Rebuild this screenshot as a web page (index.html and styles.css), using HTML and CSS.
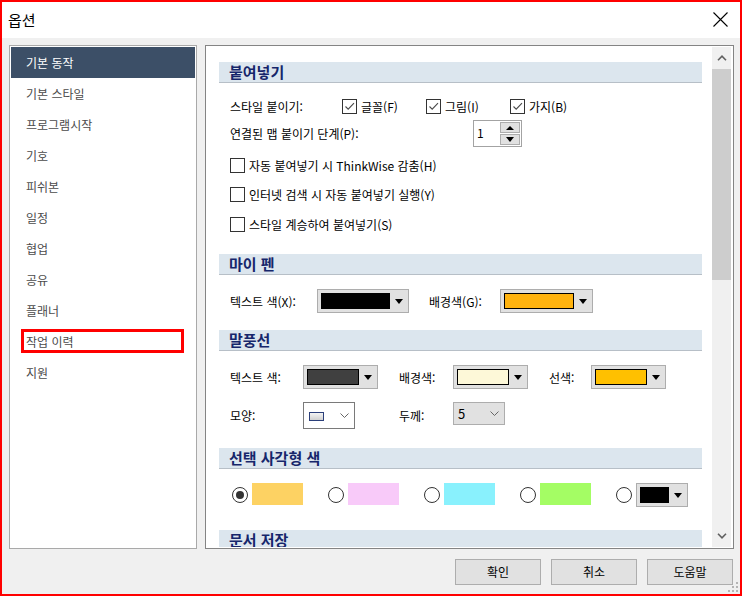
FILE: index.html
```html
<!DOCTYPE html>
<html lang="ko">
<head>
<meta charset="utf-8">
<title>옵션</title>
<link rel="stylesheet" href="styles.css">
</head>
<body>
<div class="window">
  <div class="titlebar">
    <span class="title">옵션</span>
    <svg class="close" width="15" height="15" viewBox="0 0 15 15"><path d="M0.5 0.5 L14.5 14.5 M14.5 0.5 L0.5 14.5" stroke="#000" stroke-width="1.1" fill="none"/></svg>
  </div>
  <div class="main">
    <ul class="nav">
      <li class="nav-item active">기본 동작</li>
      <li class="nav-item">기본 스타일</li>
      <li class="nav-item">프로그램시작</li>
      <li class="nav-item">기호</li>
      <li class="nav-item">피쉬본</li>
      <li class="nav-item">일정</li>
      <li class="nav-item">협업</li>
      <li class="nav-item">공유</li>
      <li class="nav-item">플래너</li>
      <li class="nav-item">작업 이력</li>
      <li class="nav-item">지원</li>
    </ul>
    <div class="panel">
      <div class="content">
        <div class="sec-head mt15">붙여넣기</div>
        <div class="row h15 mt16">
          <span class="lbl w112">스타일 붙이기:</span>
          <span class="chk-group"><span class="chk checked"><svg width="13" height="13" viewBox="0 0 13 13"><path d="M2.5 6.5 L5.2 9.2 L11 3.2" stroke="#4a4a4a" stroke-width="1.1" fill="none"/></svg></span><span class="chk-lbl">글꼴(F)</span></span>
          <span class="chk-group"><span class="chk checked"><svg width="13" height="13" viewBox="0 0 13 13"><path d="M2.5 6.5 L5.2 9.2 L11 3.2" stroke="#4a4a4a" stroke-width="1.1" fill="none"/></svg></span><span class="chk-lbl">그림(I)</span></span>
          <span class="chk-group"><span class="chk checked"><svg width="13" height="13" viewBox="0 0 13 13"><path d="M2.5 6.5 L5.2 9.2 L11 3.2" stroke="#4a4a4a" stroke-width="1.1" fill="none"/></svg></span><span class="chk-lbl">가지(B)</span></span>
        </div>
        <div class="row h27 mt6">
          <span class="lbl w243">연결된 맵 붙이기 단계(P):</span>
          <div class="spin">
            <span class="spin-val">1</span>
            <div class="spin-btns">
              <span class="spin-btn"><span class="tri-up"></span></span>
              <span class="spin-btn"><span class="tri-down"></span></span>
            </div>
          </div>
        </div>
        <div class="row h15 mt11">
          <span class="chk"></span><span class="chk-lbl">자동 붙여넣기 시 ThinkWise 감춤(H)</span>
        </div>
        <div class="row h15 mt14">
          <span class="chk"></span><span class="chk-lbl">인터넷 검색 시 자동 붙여넣기 실행(Y)</span>
        </div>
        <div class="row h15 mt15">
          <span class="chk"></span><span class="chk-lbl">스타일 계승하여 붙여넣기(S)</span>
        </div>

        <div class="sec-head mt22">마이 펜</div>
        <div class="row h24 mt14">
          <span class="lbl w87">텍스트 색(X):</span>
          <span class="ccombo w92"><span class="sw c-black"></span><span class="caret-box"><span class="tri-down"></span></span></span>
          <span class="lbl w71 ml20">배경색(G):</span>
          <span class="ccombo w93"><span class="sw c-orange"></span><span class="caret-box"><span class="tri-down"></span></span></span>
        </div>

        <div class="sec-head mt17">말풍선</div>
        <div class="balloon-grid mt14">
          <span class="lbl">텍스트 색:</span>
          <span class="ccombo"><span class="sw c-dark"></span><span class="caret-box"><span class="tri-down"></span></span></span>
          <span></span>
          <span class="lbl">배경색:</span>
          <span class="ccombo"><span class="sw c-cream"></span><span class="caret-box"><span class="tri-down"></span></span></span>
          <span></span>
          <span class="lbl">선색:</span>
          <span class="ccombo"><span class="sw c-amber"></span><span class="caret-box"><span class="tri-down"></span></span></span>

          <span class="lbl">모양:</span>
          <span class="shape-combo">
            <span class="shape-icon"></span>
            <svg class="chev" width="9" height="5" viewBox="0 0 9 5"><path d="M0.5 0.5 L4.5 4.5 L8.5 0.5" stroke="#666" stroke-width="1" fill="none"/></svg>
          </span>
          <span></span>
          <span class="lbl">두께:</span>
          <span class="thick-combo">
            <span class="thick-val">5</span>
            <svg class="chev" width="9" height="5" viewBox="0 0 9 5"><path d="M0.5 0.5 L4.5 4.5 L8.5 0.5" stroke="#666" stroke-width="1" fill="none"/></svg>
          </span>
        </div>

        <div class="sec-head mt19">선택 사각형 색</div>
        <div class="row h24 mt14 radios">
          <span class="radio-group">
            <svg class="radio" width="16" height="16" viewBox="0 0 16 16"><circle cx="8" cy="8" r="7.5" fill="#fff" stroke="#333"/><circle cx="8" cy="8" r="4" fill="#333"/></svg>
            <span class="rsw c-yellow"></span>
          </span>
          <span class="radio-group">
            <svg class="radio" width="16" height="16" viewBox="0 0 16 16"><circle cx="8" cy="8" r="7.5" fill="#fff" stroke="#333"/></svg>
            <span class="rsw c-pink"></span>
          </span>
          <span class="radio-group">
            <svg class="radio" width="16" height="16" viewBox="0 0 16 16"><circle cx="8" cy="8" r="7.5" fill="#fff" stroke="#333"/></svg>
            <span class="rsw c-cyan"></span>
          </span>
          <span class="radio-group">
            <svg class="radio" width="16" height="16" viewBox="0 0 16 16"><circle cx="8" cy="8" r="7.5" fill="#fff" stroke="#333"/></svg>
            <span class="rsw c-green"></span>
          </span>
          <span class="radio-group">
            <svg class="radio" width="16" height="16" viewBox="0 0 16 16"><circle cx="8" cy="8" r="7.5" fill="#fff" stroke="#333"/></svg>
            <span class="ccombo w52"><span class="sw c-black"></span><span class="caret-box"><span class="tri-down"></span></span></span>
          </span>
        </div>

        <div class="sec-head mt23">문서 저장</div>
      </div>
      <div class="scrollbar">
        <div class="sb-btn"><svg width="10" height="6" viewBox="0 0 10 6"><path d="M1 5.2 L5 1.2 L9 5.2" stroke="#606060" stroke-width="1.6" fill="none"/></svg></div>
        <div class="sb-thumb"></div>
        <div class="sb-track"></div>
        <div class="sb-btn"><svg width="10" height="6" viewBox="0 0 10 6"><path d="M1 0.8 L5 4.8 L9 0.8" stroke="#606060" stroke-width="1.6" fill="none"/></svg></div>
      </div>
    </div>
  </div>
  <div class="buttons">
    <button class="btn">확인</button>
    <button class="btn">취소</button>
    <button class="btn">도움말</button>
  </div>
  <div class="annot"></div>
  <svg class="grip" width="12" height="12" viewBox="0 0 12 12">
    <rect x="9" y="1" width="2" height="2" fill="#b4b4b4"/>
    <rect x="5" y="5" width="2" height="2" fill="#b4b4b4"/>
    <rect x="9" y="5" width="2" height="2" fill="#b4b4b4"/>
    <rect x="1" y="9" width="2" height="2" fill="#b4b4b4"/>
    <rect x="5" y="9" width="2" height="2" fill="#b4b4b4"/>
    <rect x="9" y="9" width="2" height="2" fill="#b4b4b4"/>
  </svg>
</div>
</body>
</html>
```

FILE: styles.css
```css
* { box-sizing: border-box; }
html, body { margin: 0; padding: 0; }
body {
  width: 742px;
  height: 596px;
  font-family: "Noto Sans CJK KR", "Noto Sans", sans-serif;
  font-size: 12px;
  color: #000;
  overflow: hidden;
}
.window {
  position: relative;
  width: 742px;
  height: 596px;
  border: 2px solid #ff0000;
  background: #f0f0f0;
}
.titlebar {
  height: 36px;
  background: #fff;
  display: flex;
  align-items: center;
  justify-content: space-between;
  padding: 0 12px 0 6px;
}
.title { font-size: 15px; line-height: 20px; color: #000; }
.close { display: block; margin-top: -2px; }

.main {
  display: flex;
  gap: 8px;
  padding: 7px 6px 0 7px;
  height: 511px;
}
.nav {
  list-style: none;
  margin: 0;
  padding: 1px;
  width: 188px;
  height: 504px;
  background: #fff;
  border: 1px solid #a9a9a9;
}
.nav-item {
  height: 31px;
  line-height: 31px;
  padding-left: 15px;
  color: #4b4b4b;
  font-size: 12px;
}
.nav-item.active { background: #3c4f67; color: #fff; }

.panel {
  width: 529px;
  height: 504px;
  background: #fff;
  border: 1px solid #848484;
  padding: 1px;
  display: flex;
}
.content {
  flex: 1;
  overflow: hidden;
  height: 500px;
}
.sec-head {
  height: 21px;
  margin: 0 10px 0 12px;
  padding-left: 10px;
  background: #dce6ee;
  border-bottom: 1px solid #b7bfc7;
  color: #16266b;
  font-weight: bold;
  font-size: 15px;
  line-height: 20px;
}
.mt6 { margin-top: 6px; }
.mt11 { margin-top: 11px; }
.mt13 { margin-top: 13px; }
.mt14 { margin-top: 14px; }
.mt15 { margin-top: 15px; }
.mt16 { margin-top: 16px; }
.mt17 { margin-top: 17px; }
.mt19 { margin-top: 19px; }
.mt22 { margin-top: 22px; }
.mt23 { margin-top: 23px; }
.ml20 { margin-left: 20px; }

.row {
  display: flex;
  align-items: center;
  margin-left: 23px;
}
.h15 { height: 15px; }
.h24 { height: 24px; }
.h27 { height: 27px; }
.lbl { flex: none; white-space: nowrap; line-height: 15px; }
.w112 { width: 112px; }
.w243 { width: 243px; }
.w87 { width: 87px; }
.w71 { width: 71px; }

.chk-group { width: 84px; display: flex; align-items: center; }
.chk {
  flex: none;
  width: 15px;
  height: 15px;
  border: 1px solid #333;
  background: #fff;
  display: flex;
  align-items: center;
  justify-content: center;
}
.chk svg { display: block; }
.chk-lbl { margin-left: 4px; white-space: nowrap; line-height: 15px; }

.spin {
  width: 49px;
  height: 27px;
  border: 1px solid #a3a3a3;
  display: flex;
}
.spin-val { flex: 1; padding: 4px 0 0 3px; line-height: 15px; }
.spin-btns {
  width: 21px;
  padding: 1px 1px 1px 0;
  display: flex;
  flex-direction: column;
  gap: 1px;
}
.spin-btn {
  flex: 1;
  background: #e1e1e1;
  border: 1px solid #adadad;
  display: flex;
  align-items: center;
  justify-content: center;
}
.tri-up {
  width: 0; height: 0;
  border-left: 4px solid transparent;
  border-right: 4px solid transparent;
  border-bottom: 4px solid #000;
}
.tri-down {
  width: 0; height: 0;
  border-left: 4.5px solid transparent;
  border-right: 4.5px solid transparent;
  border-top: 5px solid #000;
}

.ccombo {
  flex: none;
  height: 24px;
  width: 75px;
  background: #e1e1e1;
  border: 1px solid #adadad;
  padding: 3px 1px 3px 3px;
  display: flex;
}
.w92 { width: 92px; }
.w93 { width: 93px; }
.w52 { width: 52px; }
.sw { flex: 1; border: 1px solid #000; }
.caret-box {
  width: 17px;
  display: flex;
  align-items: center;
  justify-content: center;
}
.c-black { background: #000; }
.c-orange { background: #ffb30f; }
.c-dark { background: #404040; }
.c-cream { background: #fdf8d8; }
.c-amber { background: #ffc000; }
.c-yellow { background: #fdd263; }
.c-pink { background: #f8caf9; }
.c-cyan { background: #89f1fd; }
.c-green { background: #a4fd64; }

.balloon-grid {
  display: grid;
  grid-template-columns: 73px 75px 21px 54px 75px 21px 42px 75px;
  grid-template-rows: 24px 27px;
  row-gap: 13px;
  align-items: center;
  margin-left: 23px;
}
.shape-combo {
  width: 52px;
  height: 27px;
  border: 1px solid #7a7a7a;
  background: #fff;
  display: flex;
  align-items: center;
  padding: 0 5px 0 5px;
}
.shape-icon {
  width: 15px;
  height: 9px;
  border: 1px solid #2b3f7a;
  background: linear-gradient(#f4f4f4, #d0d0d0);
  margin-top: 1px;
}
.chev { display: block; margin-left: auto; }
.thick-combo {
  width: 52px;
  height: 23px;
  margin-top: -4px;
  background: #e1e1e1;
  border: 1px solid #adadad;
  display: flex;
  align-items: center;
  padding: 0 5px 0 4px;
}
.thick-val { font-size: 13px; line-height: 15px; }

.radios { margin-left: 25px; }
.radio-group {
  width: 96px;
  flex: none;
  display: flex;
  align-items: center;
}
.radio { display: block; flex: none; margin-right: 4px; }
.rsw { width: 51px; height: 22px; margin-top: -2px; }

.scrollbar {
  width: 19px;
  margin-right: 1px;
  height: 500px;
  background: #f0f0f0;
  display: flex;
  flex-direction: column;
}
.sb-btn {
  height: 22px;
  display: flex;
  align-items: center;
  justify-content: center;
}
.sb-btn svg { display: block; }
.sb-thumb { height: 211px; background: #cdcdcd; }
.sb-track { flex: 1; }

.buttons {
  display: flex;
  justify-content: flex-end;
  gap: 10px;
  padding-right: 7px;
  margin-top: 10px;
}
.btn {
  width: 86px;
  height: 26px;
  background: #e1e1e1;
  border: 1px solid #adadad;
  font-family: "Noto Sans CJK KR", sans-serif;
  font-size: 12px;
  color: #000;
  padding: 0;
  line-height: 24px;
}

.annot {
  position: absolute;
  left: 19px;
  top: 327px;
  width: 163px;
  height: 24px;
  border: 3px solid #ff0000;
}
.grip {
  position: absolute;
  right: 1px;
  bottom: 1px;
}
```
